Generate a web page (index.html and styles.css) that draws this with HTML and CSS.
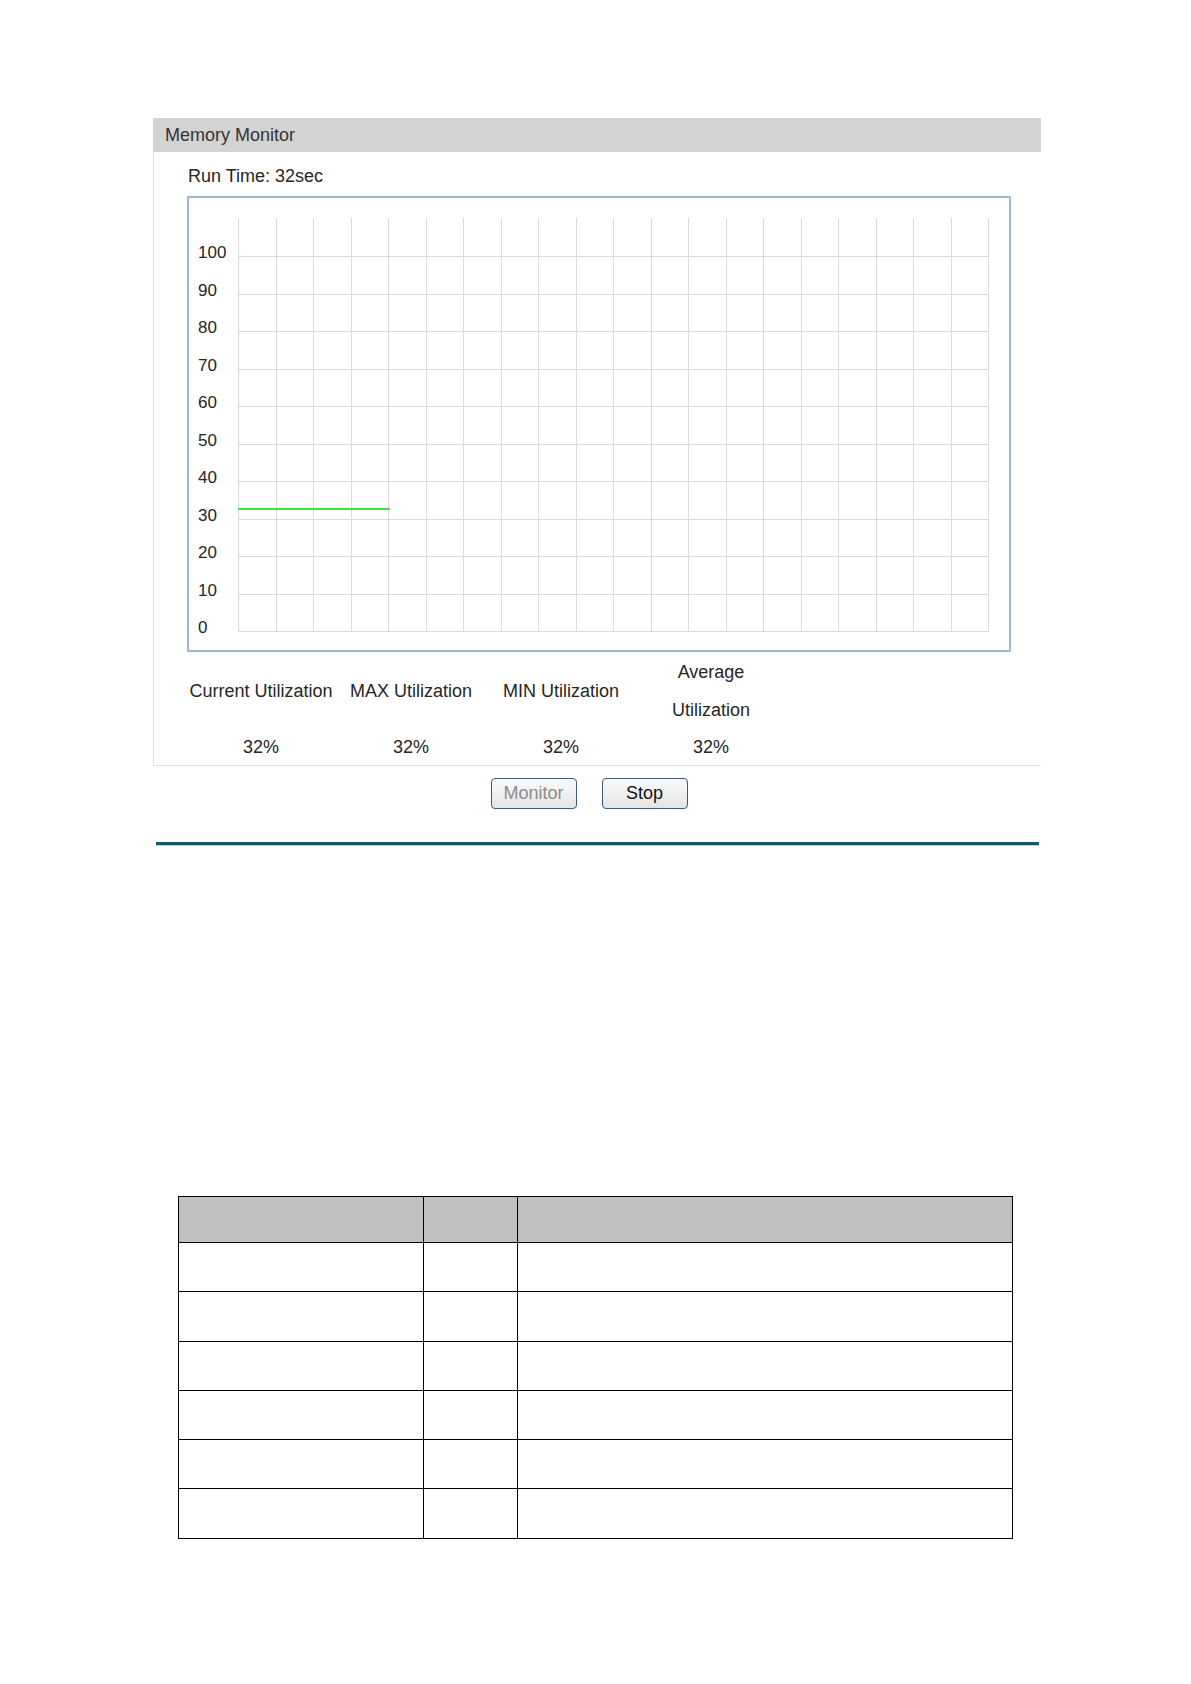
FILE: index.html
```html
<!DOCTYPE html>
<html lang="en">
<head>
<meta charset="utf-8">
<title>Memory Monitor</title>
<link rel="stylesheet" href="styles.css">
</head>
<body>
<div class="page">
  <section class="panel">
    <div class="panel-head">Memory Monitor</div>
    <div class="panel-body">
      <div class="runtime">Run Time: 32sec</div>
      <div class="chart">
        <svg class="chart-svg" width="820" height="452" viewBox="0 0 820 452" xmlns="http://www.w3.org/2000/svg">
          <g class="grid" stroke="#dadada" stroke-width="1" shape-rendering="crispEdges">
            <line x1="49.5" y1="20" x2="49.5" y2="433"/>
            <line x1="87.5" y1="20" x2="87.5" y2="433"/>
            <line x1="124.5" y1="20" x2="124.5" y2="433"/>
            <line x1="162.5" y1="20" x2="162.5" y2="433"/>
            <line x1="199.5" y1="20" x2="199.5" y2="433"/>
            <line x1="237.5" y1="20" x2="237.5" y2="433"/>
            <line x1="274.5" y1="20" x2="274.5" y2="433"/>
            <line x1="312.5" y1="20" x2="312.5" y2="433"/>
            <line x1="349.5" y1="20" x2="349.5" y2="433"/>
            <line x1="387.5" y1="20" x2="387.5" y2="433"/>
            <line x1="424.5" y1="20" x2="424.5" y2="433"/>
            <line x1="462.5" y1="20" x2="462.5" y2="433"/>
            <line x1="499.5" y1="20" x2="499.5" y2="433"/>
            <line x1="537.5" y1="20" x2="537.5" y2="433"/>
            <line x1="574.5" y1="20" x2="574.5" y2="433"/>
            <line x1="612.5" y1="20" x2="612.5" y2="433"/>
            <line x1="649.5" y1="20" x2="649.5" y2="433"/>
            <line x1="687.5" y1="20" x2="687.5" y2="433"/>
            <line x1="724.5" y1="20" x2="724.5" y2="433"/>
            <line x1="762.5" y1="20" x2="762.5" y2="433"/>
            <line x1="799.5" y1="20" x2="799.5" y2="433"/>
            <line x1="49" y1="58.5" x2="800" y2="58.5"/>
            <line x1="49" y1="96.5" x2="800" y2="96.5"/>
            <line x1="49" y1="133.5" x2="800" y2="133.5"/>
            <line x1="49" y1="171.5" x2="800" y2="171.5"/>
            <line x1="49" y1="208.5" x2="800" y2="208.5"/>
            <line x1="49" y1="246.5" x2="800" y2="246.5"/>
            <line x1="49" y1="283.5" x2="800" y2="283.5"/>
            <line x1="49" y1="321.5" x2="800" y2="321.5"/>
            <line x1="49" y1="358.5" x2="800" y2="358.5"/>
            <line x1="49" y1="396.5" x2="800" y2="396.5"/>
            <line x1="49" y1="433.5" x2="800" y2="433.5"/>
          </g>
          <g class="axis-labels">
            <text x="9" y="60">100</text>
            <text x="9" y="98">90</text>
            <text x="9" y="135">80</text>
            <text x="9" y="173">70</text>
            <text x="9" y="210">60</text>
            <text x="9" y="248">50</text>
            <text x="9" y="285">40</text>
            <text x="9" y="323">30</text>
            <text x="9" y="360">20</text>
            <text x="9" y="398">10</text>
            <text x="9" y="435">0</text>
          </g>
          <line x1="49" y1="311" x2="201" y2="311" stroke="#3fe43f" stroke-width="2"/>
        </svg>
      </div>
      <table class="stats">
        <tr class="stats-head">
          <td>Current Utilization</td>
          <td>MAX Utilization</td>
          <td>MIN Utilization</td>
          <td>Average<br>Utilization</td>
        </tr>
        <tr class="stats-vals">
          <td>32%</td>
          <td>32%</td>
          <td>32%</td>
          <td>32%</td>
        </tr>
      </table>
    </div>
  </section>
  <div class="actions">
    <button class="btn btn-disabled" type="button" disabled>Monitor</button>
    <button class="btn" type="button">Stop</button>
  </div>
  <div class="rule"></div>
  <table class="doc-table">
    <tr class="doc-head"><th class="c1"></th><th class="c2"></th><th class="c3"></th></tr>
    <tr class="doc-row"><td></td><td></td><td></td></tr>
    <tr class="doc-row"><td></td><td></td><td></td></tr>
    <tr class="doc-row"><td></td><td></td><td></td></tr>
    <tr class="doc-row"><td></td><td></td><td></td></tr>
    <tr class="doc-row"><td></td><td></td><td></td></tr>
    <tr class="doc-row"><td></td><td></td><td></td></tr>
  </table>
</div>
</body>
</html>
```
FILE: styles.css
```css
* {
  box-sizing: border-box;
}

html, body {
  margin: 0;
  padding: 0;
  background: #ffffff;
}

body {
  font-family: "Liberation Sans", Arial, sans-serif;
  color: #262626;
}

.page {
  width: 1191px;
  padding-top: 118px;
  padding-bottom: 140px;
}

/* Monitor panel */
.panel {
  margin-left: 153px;
  width: 888px;
  border-left: 1px solid #e2e2e2;
  border-bottom: 1px solid #e2e2e2;
}

.panel-head {
  height: 34px;
  line-height: 34px;
  margin-left: -1px;
  padding-left: 12px;
  background: #d3d3d3;
  font-size: 18px;
  color: #333333;
}

.panel-body {
  padding-left: 33px;
}

.runtime {
  padding-top: 10px;
  padding-bottom: 6px;
  line-height: 28px;
  font-size: 18px;
  padding-left: 1px;
}

.chart {
  width: 824px;
  height: 456px;
  border: 2px solid #a3b6cd;
  background: #ffffff;
}

.chart-svg {
  display: block;
}

.axis-labels text {
  font-family: "Liberation Sans", Arial, sans-serif;
  font-size: 17px;
  fill: #262626;
}

.stats {
  border-collapse: collapse;
  border-spacing: 0;
  margin-left: -1px;
  font-size: 18px;
}

.stats td {
  width: 150px;
  padding: 0;
  text-align: center;
  vertical-align: middle;
}

.stats-head td {
  height: 77px;
  line-height: 38px;
}

.stats-vals td {
  height: 36px;
  line-height: 36px;
}

/* Buttons */
.actions {
  display: flex;
  justify-content: center;
  gap: 25px;
  margin-left: 153px;
  width: 888px;
  padding-right: 16px;
  margin-top: 12px;
}

.btn {
  width: 86px;
  height: 31px;
  padding: 0;
  border: 1.5px solid #34598a;
  border-radius: 4px;
  background: linear-gradient(#fbfbfb, #e4e4e4);
  font-family: "Liberation Sans", Arial, sans-serif;
  font-size: 18px;
  color: #111111;
}

.btn-disabled {
  color: #8c8c8c;
}

/* Divider */
.rule {
  margin-top: 33px;
  margin-left: 156px;
  width: 883px;
  height: 4px;
  border-top: 3px solid #14586a;
  border-bottom: 1px solid #a8d8e0;
}

/* Document table */
.doc-table {
  margin-top: 350px;
  margin-left: 178px;
  width: 835px;
  border-collapse: collapse;
  border-spacing: 0;
}

.doc-table th,
.doc-table td {
  border: 1.5px solid #000000;
  padding: 0;
}

.doc-head th {
  height: 46px;
  background: #c0c0c0;
}

.doc-row td {
  height: 49.3px;
}

.c1 { width: 245px; }
.c2 { width: 94px; }
.c3 { width: 496px; }
```
